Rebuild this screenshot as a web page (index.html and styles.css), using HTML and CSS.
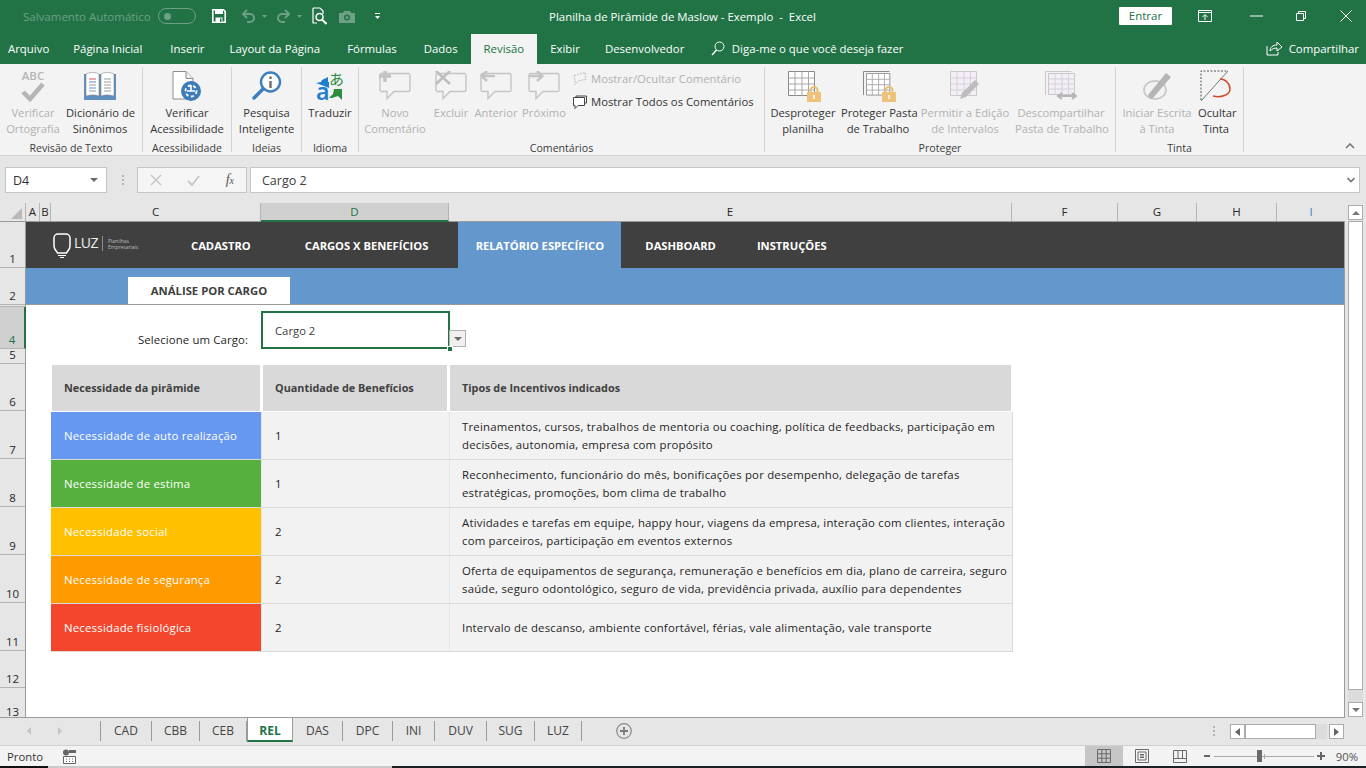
FILE: index.html
```html
<!DOCTYPE html>
<html lang="pt-BR">
<head>
<meta charset="utf-8">
<title>Planilha de Pirâmide de Maslow - Exemplo - Excel</title>
<link rel="stylesheet" href="styles.css">
</head>
<body>
<svg class="defs" width="0" height="0" aria-hidden="true">
  <symbol id="bubble" viewBox="0 0 32 30"><path d="M2.500 2.500h27a1.500 1.500 0 0 1 1.500 1.500v15a1.500 1.500 0 0 1-1.500 1.500H15l-7 7v-7H2.500A1.500 1.500 0 0 1 1 19V4a1.500 1.500 0 0 1 1.500-1.500z" fill="#f3f3f3" stroke="#c4c4c4" stroke-width="1.400"/></symbol>
  <symbol id="sheetgrid" viewBox="0 0 30 30"><path d="M.5.500h26v24H.5z" fill="#fff" stroke="#8a8a8a"/><path d="M.5 7h26M.5 13h26M.5 19h26M7 .5v24M14 .5v24M20.500.5v24" stroke="#a8a8a8" fill="none"/></symbol>
  <symbol id="lock" viewBox="0 0 14 16"><path d="M3.500 7V4.500a3.500 3.500 0 0 1 7 0V7" fill="none" stroke="#e8bf72" stroke-width="2"/><rect y="6" width="14" height="10" fill="#eec27a"/><path d="M7 9v4" stroke="#fff" stroke-width="1.500"/></symbol>
</svg>

<header class="titlebar">
  <div class="autosave">Salvamento Automático</div>
  <div class="toggle"><span class="toggle-dot"></span></div>
  <svg class="qa qa-save" width="14" height="14" viewBox="0 0 14 14"><path d="M.8.800h10.700l1.700 1.700v10.700H.8z" fill="none" stroke="#fff" stroke-width="1.600"/><path d="M3 1h8v4H3z" fill="#fff"/><path d="M3.500 8.500h7V13h-7z" fill="#fff"/><path d="M8 9.500h1.500V13H8z" fill="#217346"/></svg>
  <svg class="qa qa-undo" width="26" height="14" viewBox="0 0 26 14"><path d="M6 1 2 5l4 4M2.500 5H9a4 4 0 0 1 0 8H6" fill="none" stroke="#6f9f85" stroke-width="2"/><path d="M21 6h5l-2.500 3z" fill="#6f9f85"/></svg>
  <svg class="qa qa-redo" width="26" height="14" viewBox="0 0 26 14"><path d="M9 1l4 4-4 4M12.500 5H6a4 4 0 0 0 0 8h3" fill="none" stroke="#6f9f85" stroke-width="2"/><path d="M21 6h5l-2.500 3z" fill="#6f9f85"/></svg>
  <svg class="qa qa-prev" width="15" height="18" viewBox="0 0 15 18"><path d="M1 1h7l3 3v3M5 16H1V1" fill="none" stroke="#fff" stroke-width="1.200"/><circle cx="7.500" cy="10" r="3.500" fill="none" stroke="#fff" stroke-width="1.500"/><path d="M10 12.500 14.500 17" stroke="#fff" stroke-width="2"/></svg>
  <svg class="qa qa-cam" width="16" height="13" viewBox="0 0 16 13"><path d="M0 3h4l1-2h6l1 2h4v10H0z" fill="#6f9f85"/><circle cx="8" cy="7.500" r="3" fill="#217346"/><circle cx="8" cy="7.500" r="1.500" fill="#6f9f85"/></svg>
  <svg class="qa qa-more" width="5" height="7" viewBox="0 0 5 7"><path d="M0 0h5v1H0zM0 3h5L2.500 6z" fill="#fff"/></svg>
  <div class="doc-title">Planilha de Pirâmide de Maslow - Exemplo &nbsp;-&nbsp; Excel</div>
  <div class="entrar">Entrar</div>
  <svg class="win win-ribbon" width="14" height="12" viewBox="0 0 14 12"><path d="M.5.500h13v11H.5zM.5 2.500h13" fill="none" stroke="#fff"/><path d="M7 10V5M4.500 7 7 4.500 9.500 7" fill="none" stroke="#fff"/></svg>
  <svg class="win win-min" width="13" height="2" viewBox="0 0 13 2"><path d="M0 1h13" stroke="#fff"/></svg>
  <svg class="win win-max" width="10" height="10" viewBox="0 0 10 10"><path d="M.5 2.500h7v7h-7zM2.500 2.500v-2h7v7h-2" fill="none" stroke="#fff"/></svg>
  <svg class="win win-close" width="12" height="12" viewBox="0 0 12 12"><path d="M.5.500l11 11M11.500.500l-11 11" stroke="#fff"/></svg>
</header>

<nav class="tabs">
  <span class="tab">Arquivo</span>
  <span class="tab">Página Inicial</span>
  <span class="tab">Inserir</span>
  <span class="tab">Layout da Página</span>
  <span class="tab">Fórmulas</span>
  <span class="tab">Dados</span>
  <span class="tab tab-active">Revisão</span>
  <span class="tab">Exibir</span>
  <span class="tab">Desenvolvedor</span>
  <svg class="bulb" width="14" height="16" viewBox="0 0 14 16"><circle cx="8.500" cy="5.500" r="4.500" fill="none" stroke="#fff"/><path d="M5.500 9 1 14" stroke="#fff" stroke-width="1.500"/></svg>
  <span class="tell">Diga-me o que você deseja fazer</span>
  <svg class="share" width="16" height="15" viewBox="0 0 16 15"><path d="M1 5v9h11v-3" fill="none" stroke="#fff"/><path d="M4 10c0-4 3-6 7-6V1l5 5-5 4V7c-3 0-5 1-7 3z" fill="none" stroke="#fff"/></svg>
  <span class="share-text">Compartilhar</span>
</nav>

<section class="ribbon">
  <div class="group g1">
    <div class="btns">
      <div class="btn w66 off">
        <div class="ico abc"><span class="abc-text">ABC</span><svg width="24" height="20" viewBox="0 0 24 20"><path d="M2 10l7 7L22 2" fill="none" stroke="#b5b5b5" stroke-width="4.500"/></svg></div>
        <span>Verificar<br>Ortografia</span>
      </div>
      <div class="btn w68">
        <div class="ico"><svg width="32" height="28" viewBox="0 0 32 28"><path d="M0 2h32v26H0z" fill="#5f8fbf"/><path d="M2 2c4-2 10-2 13 0v22c-3-1.500-9-1.500-13 0zM17 2c3-2 9-2 13 0v22c-4-1.500-10-1.500-13 0z" fill="#fff" stroke="#888" stroke-width=".6"/><path d="M5 7h7" stroke="#d9534f"/><path d="M5 10h7M5 16h7" stroke="#5b8ec4"/><path d="M5 13h7M5 19h7M20 7h7M20 10h7M20 13h7M20 16h7M20 19h7" stroke="#9a9a9a"/></svg></div>
        <span>Dicionário de<br>Sinônimos</span>
      </div>
    </div>
    <div class="glabel">Revisão de Texto</div>
  </div>
  <div class="group g2">
    <div class="btns">
      <div class="btn w88">
        <div class="ico"><svg width="30" height="30" viewBox="0 0 30 30"><path d="M1 .5h13l7 7V28H1z" fill="#fff" stroke="#8c8c8c"/><path d="M14 .5v7h7" fill="#eee" stroke="#8c8c8c"/><circle cx="19" cy="20" r="10" fill="#3c7cb8"/><circle cx="19" cy="20" r="5.500" fill="none" stroke="#fff" stroke-width="1.800" stroke-dasharray="3 2.500"/><path d="M19 14v6M15 20h8" stroke="#fff" stroke-width="1.600"/></svg></div>
        <span>Verificar<br>Acessibilidade</span>
      </div>
    </div>
    <div class="glabel">Acessibilidade</div>
  </div>
  <div class="group g3">
    <div class="btns">
      <div class="btn w69">
        <div class="ico"><svg width="30" height="30" viewBox="0 0 30 30"><circle cx="18.500" cy="11" r="9.500" fill="#fff" stroke="#3d7fbf" stroke-width="2.400"/><path d="M11 18 2 27" stroke="#3d7fbf" stroke-width="3.500" stroke-linecap="round"/><path d="M18.500 5.500v2.500M18.500 10v7" stroke="#6d6d6d" stroke-width="2.400"/></svg></div>
        <span>Pesquisa<br>Inteligente</span>
      </div>
    </div>
    <div class="glabel">Ideias</div>
  </div>
  <div class="group g4">
    <div class="btns">
      <div class="btn w56">
        <div class="ico trans">
          <svg width="13" height="12" viewBox="0 0 13 12" class="t1"><path d="M12 0v5h1v6L8 9 0 6l5-1 1-2z" fill="#1f7fcf"/></svg>
          <span class="ja">あ</span>
          <span class="la">a</span>
          <svg width="13" height="11" viewBox="0 0 13 11" class="t2"><path d="M5 0l8 0v11L9 7 3 9H0l4-4z" fill="#2e8b3f"/></svg>
        </div>
        <span>Traduzir</span>
      </div>
    </div>
    <div class="glabel">Idioma</div>
  </div>
  <div class="group g5">
    <div class="btns">
      <div class="btn w72 off">
        <div class="ico"><svg class="cm" width="32" height="30" viewBox="0 0 32 30"><use href="#bubble"/><path d="M0 5h12M6 0v11" stroke="#c4c4c4" stroke-width="3.500"/></svg></div>
        <span>Novo<br>Comentário</span>
      </div>
      <div class="btn w40 off">
        <div class="ico"><svg class="cm" width="32" height="30" viewBox="0 0 32 30"><use href="#bubble"/><path d="M1 0l14 13M15 0 1 13" stroke="#bdbdbd" stroke-width="2.500"/></svg></div>
        <span>Excluir</span>
      </div>
      <div class="btn w50 off">
        <div class="ico"><svg class="cm" width="32" height="30" viewBox="0 0 32 30"><use href="#bubble"/><path d="M15 5H2M7 0 1.500 5 7 10" fill="none" stroke="#c4c4c4" stroke-width="2.500"/></svg></div>
        <span>Anterior</span>
      </div>
      <div class="btn w46 off">
        <div class="ico"><svg class="cm" width="32" height="30" viewBox="0 0 32 30"><use href="#bubble"/><path d="M1 5h13M9 0l5.500 5L9 10" fill="none" stroke="#c4c4c4" stroke-width="2.500"/></svg></div>
        <span>Próximo</span>
      </div>
      <div class="vlist">
        <div class="vitem off"><svg width="14" height="14" viewBox="0 0 14 14"><path d="M1 3.500 12 .5l1 7-7 1-4 4V8.500z" fill="none" stroke="#bdbdbd" stroke-dasharray="2 1"/></svg><span>Mostrar/Ocultar Comentário</span></div>
        <div class="vitem"><svg width="14" height="14" viewBox="0 0 14 14"><path d="M3 2.500V1h10.500v7H12" fill="none" stroke="#444"/><path d="M.5 2.500h11v8H5l-3 3v-3H.5z" fill="#fff" stroke="#444"/></svg><span>Mostrar Todos os Comentários</span></div>
      </div>
    </div>
    <div class="glabel">Comentários</div>
  </div>
  <div class="group g6">
    <div class="btns">
      <div class="btn w76">
        <div class="ico"><div class="sheetico"><svg width="30" height="30" viewBox="0 0 30 30"><use href="#sheetgrid"/></svg><svg class="lockico" width="14" height="16" viewBox="0 0 14 16"><use href="#lock"/></svg></div></div>
        <span>Desproteger<br>planilha</span>
      </div>
      <div class="btn w74">
        <div class="ico"><div class="sheetico"><svg width="30" height="30" viewBox="0 0 30 30"><path d="M.5 24V.5h26" fill="none" stroke="#8a8a8a"/><svg x="3" y="2" width="27" height="27" viewBox="0 0 30 30"><use href="#sheetgrid"/></svg></svg><svg class="lockico" width="14" height="16" viewBox="0 0 14 16"><use href="#lock"/></svg></div></div>
        <span>Proteger Pasta<br>de Trabalho</span>
      </div>
      <div class="btn w100 off">
        <div class="ico"><svg width="30" height="30" viewBox="0 0 30 30"><path d="M.5.500h26v24H.5z" fill="#f4eff6" stroke="#c9c9c9"/><path d="M.5 7h26M.5 13h26M.5 19h26M7 .5v24M14 .5v24M20.500.5v24" stroke="#d5d0da" fill="none"/><path d="M10 28 12 22 25 9l4 4-13 13z" fill="#bdbdbd"/></svg></div>
        <span>Permitir a Edição<br>de Intervalos</span>
      </div>
      <div class="btn w92 off">
        <div class="ico"><svg width="32" height="30" viewBox="0 0 32 30"><path d="M.5 24V.5h26" fill="none" stroke="#c9c9c9"/><path d="M3.500 2.500h26v21h-26z" fill="#f4eff6" stroke="#c9c9c9"/><path d="M3.500 8h26M3.500 13h26M3.500 18h26M10 2.500v21M17 2.500v21M23.500 2.500v21" stroke="#d5d0da" fill="none"/><path d="M13 25h18M17 22l-4 3 4 3M27 22l4 3-4 3" fill="none" stroke="#b5b5b5" stroke-width="2"/></svg></div>
        <span>Descompartilhar<br>Pasta de Trabalho</span>
      </div>
    </div>
    <div class="glabel">Proteger</div>
  </div>
  <div class="group g7">
    <div class="btns">
      <div class="btn w82 off">
        <div class="ico"><svg width="30" height="30" viewBox="0 0 30 30"><ellipse cx="13" cy="19" rx="11" ry="9" fill="none" stroke="#c9c9c9" stroke-width="1.800"/><path d="M8 28 6 24 24 2l5 4L11 27z" fill="#b5b5b5"/></svg></div>
        <span>Iniciar Escrita<br>à Tinta</span>
      </div>
      <div class="btn w36">
        <div class="ico"><svg width="32" height="32" viewBox="0 0 32 32"><path d="M1 30V1h27" fill="none" stroke="#555" stroke-dasharray="2 1.500"/><path d="M1 31 28 1" stroke="#777"/><path d="M20 9a10 10 0 0 1 10 10c0 6-9 9-17 7" fill="none" stroke="#d2492a" stroke-width="1.500"/></svg></div>
        <span>Ocultar<br>Tinta</span>
      </div>
    </div>
    <div class="glabel">Tinta</div>
  </div>
  <svg class="collapse" width="10" height="6" viewBox="0 0 10 6"><path d="M1 5l4-4 4 4" fill="none" stroke="#777" stroke-width="1.600"/></svg>
</section>

<section class="fbar">
  <div class="namebox"><span>D4</span><i class="caret"></i></div>
  <div class="fdots"></div>
  <div class="fbtns">
    <svg width="12" height="12" viewBox="0 0 12 12"><path d="M1 1l10 10M11 1 1 11" stroke="#c6c6c6" stroke-width="1.500"/></svg>
    <svg width="13" height="11" viewBox="0 0 13 11"><path d="M1 6l4 4 7-9" fill="none" stroke="#c6c6c6" stroke-width="1.800"/></svg>
    <span class="fx">f<span class="fx-x">x</span></span>
  </div>
  <div class="finput"><span>Cargo 2</span>
    <svg width="8" height="6" viewBox="0 0 8 6"><path d="M.5 1 4 4.500 7.500 1" fill="none" stroke="#777" stroke-width="1.600"/></svg>
  </div>
</section>

<section class="sheet">
  <div class="grid">
    <div class="colhdr">
      <div class="corner"><i></i></div>
      <div class="ch cA">A</div>
      <div class="ch cB">B</div>
      <div class="ch cC">C</div>
      <div class="ch cD sel">D</div>
      <div class="ch cE">E</div>
      <div class="ch cF">F</div>
      <div class="ch cG">G</div>
      <div class="ch cH">H</div>
      <div class="ch cI">I</div>
    </div>
    <div class="gridbody">
      <div class="rowhdr">
        <div class="rh r1">1</div>
        <div class="rh r2">2</div>
        <div class="rh r3">3</div>
        <div class="rh r4 sel">4</div>
        <div class="rh r5">5</div>
        <div class="rh r6">6</div>
        <div class="rh r7">7</div>
        <div class="rh r7">8</div>
        <div class="rh r7">9</div>
        <div class="rh r7">10</div>
        <div class="rh r7">11</div>
        <div class="rh r12">12</div>
        <div class="rh r13">13</div>
      </div>
      <div class="content">
        <div class="navband">
          <div class="logo">
            <svg width="18" height="25" viewBox="0 0 18 25"><path d="M5 1h8a4 4 0 0 1 4 4v8c0 4-3 5-3.500 7h-9C4 18 1 17 1 13V5a4 4 0 0 1 4-4z" fill="none" stroke="#fff" stroke-width="1.500"/><path d="M5 22.500h8M7 24.500h4" stroke="#fff"/></svg>
            <span class="luz">LUZ</span>
            <span class="logo-sep"></span>
            <span class="logo-sub">Planilhas<br>Empresariais</span>
          </div>
          <a class="nav nav-cad">CADASTRO</a>
          <a class="nav nav-car">CARGOS X BENEFÍCIOS</a>
          <a class="nav nav-rel">RELATÓRIO ESPECÍFICO</a>
          <a class="nav nav-das">DASHBOARD</a>
          <a class="nav nav-ins">INSTRUÇÕES</a>
        </div>
        <div class="subband"><div class="subtab">ANÁLISE POR CARGO</div></div>
        <div class="selector">
          <div class="sel-label">Selecione um Cargo:</div>
          <div class="sel-cell">Cargo 2<i class="handle"></i></div>
          <div class="sel-drop"><i class="caret"></i></div>
        </div>
        <div class="table">
          <div class="th">Necessidade da pirâmide</div>
          <div class="th">Quantidade de Benefícios</div>
          <div class="th">Tipos de Incentivos indicados</div>

          <div class="td need c-blue">Necessidade de auto realização</div>
          <div class="td qty">1</div>
          <div class="td inc">Treinamentos, cursos, trabalhos de mentoria ou coaching, política de feedbacks, participação em<br>decisões, autonomia, empresa com propósito</div>

          <div class="td need c-green">Necessidade de estima</div>
          <div class="td qty">1</div>
          <div class="td inc">Reconhecimento, funcionário do mês, bonificações por desempenho, delegação de tarefas<br>estratégicas, promoções, bom clima de trabalho</div>

          <div class="td need c-yellow">Necessidade social</div>
          <div class="td qty">2</div>
          <div class="td inc">Atividades e tarefas em equipe, happy hour, viagens da empresa, interação com clientes, interação<br>com parceiros, participação em eventos externos</div>

          <div class="td need c-orange">Necessidade de segurança</div>
          <div class="td qty">2</div>
          <div class="td inc">Oferta de equipamentos de segurança, remuneração e benefícios em dia, plano de carreira, seguro<br>saúde, seguro odontológico, seguro de vida, previdência privada, auxílio para dependentes</div>

          <div class="td need c-red">Necessidade fisiológica</div>
          <div class="td qty">2</div>
          <div class="td inc">Intervalo de descanso, ambiente confortável, férias, vale alimentação, vale transporte</div>
        </div>
      </div>
    </div>
  </div>
  <div class="vscroll">
    <div class="sb-btn"><i class="up"></i></div>
    <div class="sb-thumb"></div>
    <div class="sb-track"></div>
    <div class="sb-btn"><i class="down"></i></div>
  </div>
</section>

<section class="sheettabs">
  <div class="tabnav">
    <svg width="5" height="8" viewBox="0 0 5 8"><path d="M4 0v8L0 4z" fill="#c4c4c4"/></svg>
    <svg width="5" height="8" viewBox="0 0 5 8"><path d="M1 0v8l4-4z" fill="#c4c4c4"/></svg>
  </div>
  <div class="stabs">
    <span class="stab">CAD</span>
    <span class="stab">CBB</span>
    <span class="stab">CEB</span>
    <span class="stab stab-on">REL</span>
    <span class="stab">DAS</span>
    <span class="stab">DPC</span>
    <span class="stab">INI</span>
    <span class="stab">DUV</span>
    <span class="stab">SUG</span>
    <span class="stab">LUZ</span>
  </div>
  <svg class="addsheet" width="16" height="16" viewBox="0 0 16 16"><circle cx="8" cy="8" r="7.300" fill="none" stroke="#8a8a8a" stroke-width="1.200"/><path d="M8 4v8M4 8h8" stroke="#7a7a7a" stroke-width="1.800"/></svg>
  <div class="hs-dots"></div>
  <div class="hscroll">
    <div class="hs-btn"><svg width="5" height="8" viewBox="0 0 5 8"><path d="M5 0v8L0 4z" fill="#666"/></svg></div>
    <div class="hs-thumb"></div>
    <div class="hs-track"></div>
    <div class="hs-btn hs-last"><svg width="5" height="8" viewBox="0 0 5 8"><path d="M0 0v8l5-4z" fill="#666"/></svg></div>
  </div>
</section>

<footer class="status">
  <span class="ready">Pronto</span>
  <svg class="macro" width="14" height="15" viewBox="0 0 14 15"><circle cx="4" cy="3.500" r="3" fill="#666"/><path d="M7 1h7v3H7z" fill="#666"/><path d="M1.500 7.500h12v7h-12z" fill="#fff" stroke="#666"/><path d="M4 10h1M7 10h1M10 10h1M4 12.500h1M7 12.500h1M10 12.500h1" stroke="#666"/></svg>
  <div class="views">
    <div class="view view-on"><svg width="14" height="14" viewBox="0 0 14 14"><path d="M.5.500h13v13H.5zM.5 4.800h13M.5 9.200h13M4.800.5v13M9.200.5v13" fill="none" stroke="#6a6a6a"/></svg></div>
    <div class="view"><svg width="14" height="14" viewBox="0 0 14 14"><path d="M.5.500h13v13H.5zM3 3h8v8H3z" fill="none" stroke="#6a6a6a"/><path d="M5 5.500h4M5 7h4M5 8.500h4" stroke="#6a6a6a"/></svg></div>
    <div class="view"><svg width="14" height="13" viewBox="0 0 14 13"><path d="M.5.500h13v12H.5zM.5 8.500h13M5 .5v8M9.500.5v8" fill="none" stroke="#6a6a6a"/></svg></div>
  </div>
  <div class="zoom">
    <i class="zminus"></i>
    <div class="zslider"><i class="ztick"></i><i class="zthumb"></i></div>
    <svg width="8" height="8" viewBox="0 0 8 8"><path d="M4 0v8M0 4h8" stroke="#666" stroke-width="2"/></svg>
    <span class="zval">90%</span>
  </div>
</footer>
<div class="taskstrip"><i class="ts-a"></i><i class="ts-b"></i><i class="ts-c"></i></div>
</body>
</html>
```
FILE: styles.css
```css
* { box-sizing: border-box; }
html, body { margin: 0; padding: 0; }
body {
  width: 1366px; height: 768px; overflow: hidden;
  display: flex; flex-direction: column;
  font-family: "Open Sans", "Noto Sans", "Liberation Sans", sans-serif;
  font-size: 11.5px; color: #262626; background: #e6e6e6;
}
i { display: block; font-style: normal; }
.defs { position: absolute; }

/* title bar */
.titlebar {
  height: 32px; flex: none; background: #217346; color: #fff;
  display: flex; align-items: center; position: relative; padding-left: 23px;
}
.autosave { color: #6f9f85; width: 135px; font-size: 11.500px; }
.toggle { width: 38px; height: 16px; border: 1px solid #6f9f85; border-radius: 8px; padding: 3px 5px; }
.toggle-dot { display: block; width: 7px; height: 7px; border-radius: 50%; background: #6f9f85; margin-top: 1px; }
.qa-save { margin-left: 16px; }
.qa-undo { margin-left: 15px; }
.qa-redo { margin-left: 9px; }
.qa-prev { margin-left: 10px; }
.qa-cam { margin-left: 12px; }
.qa-more { margin-left: 20px; }
.doc-title { position: absolute; left: 480px; width: 405px; text-align: center; font-size: 11.400px; }
.entrar {
  margin-left: auto; width: 53px; height: 18px; background: #fff; color: #217346;
  text-align: center; line-height: 18px; font-size: 11.500px; border-radius: 1px;
}
.win-ribbon { margin-left: 26px; }
.win-min { margin-left: 38px; }
.win-max { margin-left: 33px; }
.win-close { margin-left: 34px; margin-right: 14px; }

/* tabs */
.tabs {
  height: 32px; flex: none; background: #217346; color: #fff;
  display: flex; align-items: flex-end; padding-left: 0; font-size: 11.400px;
}
.tab { height: 30px; line-height: 30px; padding: 0 13.500px; white-space: nowrap; }
.tab:nth-child(1) { padding: 0 10.500px 0 8px; }
.tab:nth-child(2) { padding-right: 14.500px; }
.tab:nth-child(3) { margin-right: -2px; }
.tab:nth-child(6) { margin-right: -1.500px; }
.tab:nth-child(8) { margin-right: -2px; }
.tab-active { background: #f3f3f3; color: #217346; padding: 0 12.500px; margin-left: 1.500px; }
.bulb { margin: 0 7px 7px 13px; }
.tell { line-height: 30px; }
.share { margin: 0 7px 8px auto; }
.share-text { line-height: 30px; margin-right: 7px; }

/* ribbon */
.ribbon {
  height: 92px; flex: none; background: #f3f3f3; border-bottom: 1px solid #d4d4d4;
  display: flex; position: relative; padding-top: 3px;
}
.group {
  height: 85px; border-right: 1px solid #d2d2d2; display: flex; flex-direction: column; flex: none;
}
.g1 { width: 143px; }
.g2 { width: 89px; }
.g3 { width: 70px; }
.g4 { width: 57px; }
.g5 { width: 406px; }
.g6 { width: 351px; }
.g7 { width: 128px; }
.btns { display: flex; flex: none; height: 73px; }
.glabel { text-align: center; height: 12px; line-height: 16px; font-size: 10.600px; color: #3c3c3c; white-space: nowrap; }
.btn { text-align: center; line-height: 16px; font-size: 11.200px; white-space: nowrap; flex: none; color: #333; }
.btn .ico { height: 38px; display: flex; align-items: center; justify-content: center; position: relative; }
.off { color: #b1b1b1; }
.w36 { width: 36px; } .w40 { width: 40px; } .w46 { width: 46px; } .w50 { width: 50px; }
.w56 { width: 56px; } .w66 { width: 66px; } .w68 { width: 68px; } .w69 { width: 69px; }
.w72 { width: 72px; } .w74 { width: 74px; } .w76 { width: 76px; } .w82 { width: 82px; }
.w88 { width: 88px; } .w92 { width: 92px; } .w100 { width: 100px; }
.btn.off { color: #b1b1b1; }
.abc { flex-direction: column; justify-content: flex-start !important; }
.abc-text { font-size: 11.500px; font-weight: 600; color: #b5b5b5; line-height: 14px; margin-top: 2px; }
.abc svg { margin-top: -1px; }
.trans { display: block !important; width: 34px; margin: 0 auto; }
.t1 { position: absolute; left: 3px; top: 10px; }
.t2 { position: absolute; left: 16px; top: 22px; }
.ja { position: absolute; left: 16px; top: 3px; font: 15px/18px "Noto Sans CJK JP", sans-serif; color: #2e8b3f; }
.la { position: absolute; left: 3px; top: 12px; font: 600 23px/24px "Noto Sans", sans-serif; color: #1f7fcf; }
.sheetico { position: relative; width: 30px; height: 30px; }
.sheetico > svg:first-child { display: block; }
.lockico { position: absolute; right: -3px; bottom: -1px; }
.vlist { padding: 0 0 0 6px; font-size: 11.300px; }
.vitem { display: flex; align-items: center; gap: 4px; height: 23px; white-space: nowrap; color: #333; }
.vitem.off { color: #b1b1b1; }
.collapse { position: absolute; right: 11px; bottom: 6px; }

/* formula bar */
.fbar { height: 47px; flex: none; display: flex; align-items: flex-start; padding: 11px 6px 0 5px; background: #e6e6e6; font-size: 12.500px; }
.namebox {
  width: 102px; height: 26px; background: #fff; border: 1px solid #c6c6c6;
  display: flex; align-items: center; justify-content: space-between; padding: 0 8px 0 7px; color: #333;
}
.caret { width: 0; height: 0; border-left: 4px solid transparent; border-right: 4px solid transparent; border-top: 4px solid #6a6a6a; }
.fdots { width: 2px; height: 10px; margin: 8px 13px 0 15px; background: repeating-linear-gradient(#b5b5b5 0 2px, transparent 2px 4px); }
.fbtns {
  width: 110px; height: 26px; background: #f5f5f5; border: 1px solid #c6c6c6;
  display: flex; align-items: center; justify-content: space-between; padding: 0 12px;
}
.fx { font: italic 14px/16px "Liberation Serif", serif; color: #555; white-space: nowrap; }
.fx-x { font-size: 10px; }
.finput {
  flex: 1; height: 26px; margin-left: 3px; background: #fff; border: 1px solid #c6c6c6;
  display: flex; align-items: center; justify-content: space-between; padding: 0 4px 0 11px; color: #404040;
}

/* sheet */
.sheet { height: 515px; flex: none; display: flex; background: #e6e6e6; }
.grid { width: 1345px; border-bottom: 1px solid #9a9a9a; display: flex; flex-direction: column; overflow: hidden; }
.colhdr { display: flex; height: 19px; flex: none; font-size: 11.500px; color: #262626; border-bottom: 1px solid #9a9a9a; }
.corner { width: 26px; position: relative; border-right: 1px solid #b4b4b4; }
.corner i { position: absolute; right: 3px; bottom: 2px; border-left: 11px solid transparent; border-bottom: 11px solid #b9b9b9; }
.ch { text-align: center; line-height: 17px; border-right: 1px solid #b4b4b4; }
.cA { width: 14px; } .cB { width: 11px; } .cC { width: 210px; } .cD { width: 188px; }
.cE { width: 563px; } .cF { width: 106px; } .cG { width: 79px; } .cH { width: 80px; }
.cI { width: 68px; border-right: 0; color: #3d7fbf; }
.ch.sel { background: #d0d0d0; color: #217346; border-bottom: 2px solid #217346; height: 19px; }
.gridbody { display: flex; flex: 1; min-height: 0; }
.rowhdr { width: 26px; flex: none; font-size: 11.500px; border-right: 1px solid #9a9a9a; }
.rh { display: flex; align-items: flex-end; justify-content: center; overflow: hidden; border-bottom: 1px solid #b4b4b4; line-height: 16px; }
.r1 { height: 46px; } .r2 { height: 37px; } .r3 { height: 2px; } .r4 { height: 42px; }
.r5 { height: 15px; align-items: flex-start; line-height: 11px; } .r6 { height: 47px; } .r7 { height: 48px; } .r12 { height: 37px; } .r13 { height: 33px; }
.rh.sel { background: #d0d0d0; color: #217346; border-right: 2px solid #217346; margin-right: -1px; }

.content { flex: 1; background: #fff; min-width: 0; border-right: 1px solid #9a9a9a; }
.navband { height: 46px; background: #404040; display: flex; align-items: stretch; position: relative; color: #fff; font-weight: 700; font-size: 11.200px; }
.logo { width: 165px; padding: 11px 0 0 27px; display: flex; align-items: flex-start; font-weight: 400; flex: none; }
.luz { font-size: 14px; line-height: 20px; margin-left: 3px; color: #eee; letter-spacing: -.5px; }
.logo-sep { width: 1px; height: 15px; background: #8a8a8a; margin: 3px 5px 0 4px; }
.logo-sub { font-size: 5px; line-height: 6px; color: #bdbdbd; margin-top: 5px; white-space: nowrap; }
.nav { display: flex; align-items: center; white-space: nowrap; padding-top: 1px; }
.nav-car { margin-left: 54px; }
.nav-rel { margin-left: 30px; width: 163px; justify-content: center; background: #6497cb; }
.nav-das { margin-left: 24px; }
.nav-ins { margin-left: 41px; }
.subband { height: 37px; background: #6497cb; padding: 9px 0 0 102px; border-bottom: 1px solid #9a9a9a; }
.subtab { width: 162px; height: 27px; background: #fff; color: #404040; font-weight: 700; font-size: 11.300px; text-align: center; line-height: 27px; }
.selector { height: 59px; display: flex; align-items: flex-start; }
.sel-label { width: 222px; text-align: right; margin-top: 27px; font-size: 11.400px; letter-spacing: .1px; white-space: nowrap; }
.sel-cell { width: 189px; height: 38px; margin: 6px 0 0 13px; border: 2px solid #217346; padding: 10px 0 0 12px; font-size: 11.300px; color: #404040; position: relative; flex: none; }
.handle { position: absolute; right: -5px; bottom: -5px; width: 6px; height: 6px; background: #217346; border: 1px solid #fff; z-index: 2; }
.sel-drop { width: 17px; height: 17px; margin: 25px 0 0 -1px; background: #f0f0f0; border: 1px solid #b0b0b0; display: flex; align-items: center; justify-content: center; position: relative; }

.table { display: grid; grid-template-columns: 210px 188px 564px; grid-auto-rows: 48px; margin-left: 25px; width: 962px; font-size: 11.400px; letter-spacing: .2px; }
.th { height: 46px; background: #d9d9d9; color: #404040; font-weight: 700; font-size: 10.850px; letter-spacing: 0; margin: 1px 1px 0; padding: 0 0 2px 12px; display: flex; align-items: center; }
.th:nth-child(2) { margin: 1px 2px 0; }
.th:nth-child(3) { margin: 1px 2px 0 1px; }
.td { display: flex; align-items: center; padding: 0 0 0 13px; border-bottom: 1px solid #d9d9d9; line-height: 18px; color: #1f1f1f; }
.need { color: #fff; }
.qty, .inc { background: #f2f2f2; border-left: 1px solid #e6e6e6; }
.inc { display: block; padding: 6px 0 0 12px; border-right: 1px solid #d9d9d9; white-space: nowrap; }
.td.inc:last-child { padding-top: 15px; }
.c-blue { background: #6698f2; }
.c-green { background: #55b03d; }
.c-yellow { background: #ffc000; }
.c-orange { background: #ff9a00; }
.c-red { background: #f4462d; }

/* vertical scrollbar */
.vscroll { width: 21px; padding: 2px 3px 1px; display: flex; flex-direction: column; }
.sb-btn { height: 15px; background: #fff; border: 1px solid #ababab; display: flex; align-items: center; justify-content: center; flex: none; }
.sb-btn .up { border-left: 4px solid transparent; border-right: 4px solid transparent; border-bottom: 4px solid #777; }
.sb-btn .down { border-left: 4px solid transparent; border-right: 4px solid transparent; border-top: 4px solid #777; }
.sb-thumb { height: 469px; flex: none; background: #fff; border: 1px solid #ababab; margin-top: 1px; }
.sb-track { flex: 1; background: #dcdcdc; }

/* sheet tabs */
.sheettabs { height: 27px; flex: none; display: flex; align-items: flex-start; background: #e6e6e6; position: relative; font-size: 12px; color: #444; }
.tabnav { width: 100px; display: flex; gap: 25px; padding: 9px 0 0 27px; flex: none; }
.stabs { display: grid; grid-template-columns: 51px 48px 47px 46px 50px 50px 42px 52px 48px 47px; align-items: start; height: 20px; margin-top: 3px; border-left: 1px solid #9a9a9a; }
.stab { text-align: center; line-height: 20px; height: 20px; border-right: 1px solid #9a9a9a; }
.stab-on { background: #fff; color: #217346; font-weight: 700; height: 24px; margin-top: -3px; padding-top: 3px; border-left: 1px solid #9a9a9a; border-bottom: 2px solid #217346; }
.addsheet { margin: 5px 0 0 34px; }
.hs-dots { margin: 8px 0 0 581px; width: 2px; height: 10px; background: repeating-linear-gradient(#b5b5b5 0 2px, transparent 2px 4px); }
.hscroll { position: absolute; right: 22px; top: 6px; width: 114px; height: 15px; display: flex; }
.hs-btn { width: 15px; background: #fff; border: 1px solid #ababab; display: flex; align-items: center; justify-content: center; flex: none; }
.hs-last { margin-left: 2px; }
.hs-thumb { width: 71px; background: #fff; border: 1px solid #ababab; }
.hs-track { flex: 1; background: #dcdcdc; }

/* status */
.status { height: 21px; flex: none; background: #f3f3f3; border-top: 1px solid #d0d0d0; display: flex; align-items: center; padding-left: 7px; font-size: 11.300px; color: #333; }
.ready { width: 55px; }
.views { margin-left: auto; display: flex; height: 20px; }
.view { width: 38px; display: flex; align-items: center; justify-content: center; }
.view-on { background: #c6c6c6; }
.zoom { display: flex; align-items: center; margin: 0 8px 0 5px; }
.zminus { width: 6px; height: 2px; background: #666; }
.zslider { width: 100px; height: 1px; background: #aaa; margin: 0 3px 0 4px; position: relative; }
.zthumb { position: absolute; left: 43px; top: -6px; width: 5px; height: 12px; background: #6a6a6a; }
.ztick { position: absolute; left: 50px; top: -2px; width: 1px; height: 5px; background: #aaa; }
.zval { margin-left: 11px; color: #555; }
.taskstrip { height: 2px; flex: none; display: flex; background: #16211c; }
.ts-a { width: 48px; background: #111; }
.ts-b { width: 344px; background: #c9c9c9; }
.ts-c { flex: 1; background: #1a1f24; }
```
